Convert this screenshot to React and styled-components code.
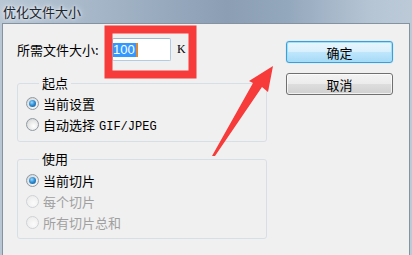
import React from 'react';
import styled, { createGlobalStyle, css } from 'styled-components';

const GlobalStyle = createGlobalStyle`
  html, body {
    margin: 0;
    padding: 0;
    background: #f0f0f0;
  }
  body {
    font-family: "Noto Sans CJK SC", "Noto Sans", sans-serif;
    font-size: 13px;
    color: #000;
  }
`;

const CJK = `"Noto Sans CJK SC", "Noto Sans", sans-serif`;

const Window = styled.div`
  position: relative;
  width: 412px;
  height: 255px;
  overflow: hidden;
  display: flex;
  flex-direction: column;
  background: linear-gradient(90deg, #b9c7d5 0%, #a4b5c7 25%, #8b9eb4 55%, #94a8bd 70%, #b6c5d4 90%, #bccad8 100%);
`;

const TitleBar = styled.div`
  height: 23px;
  flex: none;
  display: flex;
  align-items: center;
  padding-left: 3px;
  font-family: ${CJK};
  font-size: 13px;
  color: #1c2530;
  text-shadow: 0 0 6px rgba(255, 255, 255, 0.9), 0 0 3px rgba(255, 255, 255, 0.8);
  letter-spacing: 0;
`;

const Frame = styled.div`
  flex: 1;
  display: flex;
  padding: 0 2px;
`;

const Body = styled.div`
  flex: 1;
  display: flex;
  background: #f0f0f0;
  border: 1px solid #8592a0;
  border-bottom: none;
`;

const FormColumn = styled.div`
  display: flex;
  flex-direction: column;
  padding: 14px 0 0 14px;
`;

const SizeRow = styled.div`
  display: flex;
  align-items: center;
  height: 23px;
`;

const Label = styled.span`
  width: 95px;
  line-height: 16px;
`;

const FakeInput = styled.div`
  box-sizing: border-box;
  width: 59px;
  height: 23px;
  background: #fff;
  border: 1px solid #b3cbe2;
  border-top-color: #9fb7cf;
  border-radius: 2px;
  display: flex;
  align-items: center;
  padding-left: 0;
`;

const Selected = styled.span`
  font-family: "Liberation Sans", Arial, sans-serif;
  font-size: 13px;
  line-height: 14px;
  height: 14px;
  background: #3399ff;
  color: #fff;
  padding: 0 1px 0 0;
  border-right: 2px solid #d98b3a;
`;

const Unit = styled.span`
  margin-left: 6px;
  font-family: "Liberation Serif", serif;
  font-size: 12px;
`;

const Group = styled.fieldset`
  box-sizing: border-box;
  width: 250px;
  margin: ${p => (p.$first ? '14px' : '9px')} 0 0 0;
  padding: ${p => (p.$first ? '2px 0 6px 8px' : '3px 0 5px 8px')};
  border: 1px solid #d7dfe6;
  border-radius: 3px;
  min-inline-size: 0;
`;

const Legend = styled.legend`
  margin-left: 13px;
  padding: 0 3px;
  font-size: 13px;
  line-height: 16px;
`;

const Option = styled.div`
  display: flex;
  align-items: center;
  height: 21px;
  gap: 4px;
  color: ${p => (p.$disabled ? '#a0a0a0' : '#000')};
`;

const Radio = styled.span`
  box-sizing: border-box;
  width: 13px;
  height: 13px;
  border-radius: 50%;
  display: flex;
  align-items: center;
  justify-content: center;
  border: 1px solid #8f9aa3;
  background: radial-gradient(circle at 60% 65%, #ffffff 0%, #e6e6e6 55%, #c9c9c9 100%);
  ${p =>
    p.$disabled &&
    css`
      border-color: #cfd3d6;
      background: radial-gradient(circle at 60% 65%, #fbfbfb 0%, #eeeeee 70%, #e2e2e2 100%);
    `}
  &::after {
    content: '';
    display: ${p => (p.$checked ? 'block' : 'none')};
    width: 7px;
    height: 7px;
    border-radius: 50%;
    background: radial-gradient(circle at 40% 35%, #9ad9ff 0%, #2f8fd6 45%, #0d4f86 100%);
  }
`;

const Mono = styled.span`
  font-family: "Liberation Mono", monospace;
  font-size: 12px;
  margin-left: 4px;
`;

const ButtonColumn = styled.div`
  display: flex;
  flex-direction: column;
  gap: 10px;
  padding: 17px 0 0 19px;
`;

const Button = styled.div`
  box-sizing: border-box;
  width: 107px;
  height: 22px;
  border-radius: 3px;
  display: flex;
  align-items: center;
  justify-content: center;
  font-size: 13px;
  border: 1px solid #707070;
  background: linear-gradient(180deg, #f3f3f3 0%, #ececec 48%, #dddddd 52%, #d0d0d0 100%);
  box-shadow: inset 0 0 0 1px rgba(255, 255, 255, 0.7);
  ${p =>
    p.$primary &&
    css`
      border-color: #3c9fd6;
      background: linear-gradient(180deg, #eaf6fd 0%, #d9f0fc 48%, #bee6fd 52%, #a7d9f5 100%);
      box-shadow: inset 0 0 0 1px #9fe0fb, 0 0 1px #6fc3ee;
    `}
`;

const Annotations = styled.svg`
  position: absolute;
  left: 0;
  top: 0;
  pointer-events: none;
`;

const App = () => {
  return (
    <>
      <GlobalStyle />
      <Window>
        <TitleBar>优化文件大小</TitleBar>
        <Frame>
          <Body>
            <FormColumn>
              <SizeRow>
                <Label>所需文件大小:</Label>
                <FakeInput>
                  <Selected>100</Selected>
                </FakeInput>
                <Unit>K</Unit>
              </SizeRow>
              <Group $first>
                <Legend>起点</Legend>
                <Option>
                  <Radio $checked />
                  当前设置
                </Option>
                <Option>
                  <Radio />
                  <span>
                    自动选择<Mono>GIF/JPEG</Mono>
                  </span>
                </Option>
              </Group>
              <Group>
                <Legend>使用</Legend>
                <Option>
                  <Radio $checked />
                  当前切片
                </Option>
                <Option $disabled>
                  <Radio $disabled />
                  每个切片
                </Option>
                <Option $disabled>
                  <Radio $disabled />
                  所有切片总和
                </Option>
              </Group>
            </FormColumn>
            <ButtonColumn>
              <Button $primary>确定</Button>
              <Button>取消</Button>
            </ButtonColumn>
          </Body>
        </Frame>
        <Annotations width='412' height='255' viewBox='0 0 412 255'>
          <rect x='108.5' y='29.5' width='84' height='45' fill='none' stroke='#f73a3a' strokeWidth='8' />
          <polygon
            points='212,156 253,83 249,81 273,66 268,92 262,87 215,156'
            fill='#f73a3a'
          />
        </Annotations>
      </Window>
    </>
  );
};

export default App;
